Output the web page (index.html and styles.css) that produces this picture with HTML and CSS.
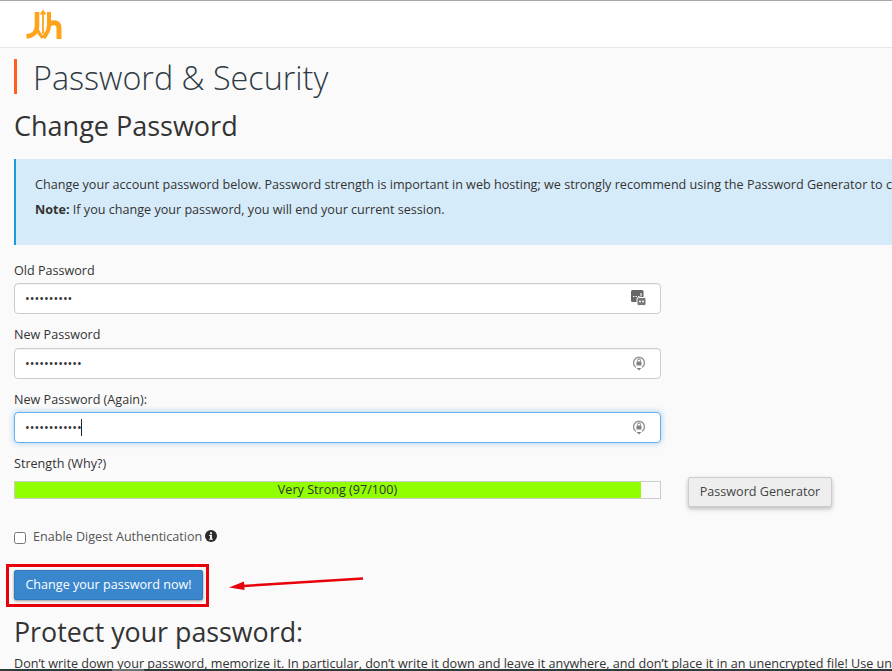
FILE: index.html
```html
<!DOCTYPE html>
<html lang="en">
<head>
  <meta charset="UTF-8" />
  <title>Password &amp; Security</title>
  <link rel="stylesheet" href="styles.css">
</head>
<body>
  <header class="topbar">
    <svg class="logo" width="36" height="32" viewBox="0 0 36 32" fill="none" stroke="#ffa31a" stroke-width="4.600">
      <path d="M11 3v13c0 7-3 10.500-10.500 11.500" />
      <path d="M11 18c0 5 3 7 5.500 11" stroke-width="3" />
      <path d="M23 3v13c0 7-3 9-5.500 13" stroke-width="4" />
      <path d="M23 16c2-3 10-4 10 3v11" stroke-width="5" />
      <path d="M17 5v20" stroke-width="1.800" />
      <path d="M13.500 5.500L17 .5l3.500 5z" fill="#ffa31a" stroke="none" />
    </svg>
  </header>

  <main class="page">
    <h1 class="page-title">Password &amp; Security</h1>
    <h2 class="section-title">Change Password</h2>

    <div class="notice">
      <p>Change your account password below. Password strength is important in web hosting; we strongly recommend using the Password Generator to create your password.</p>
      <p><b>Note:</b> If you change your password, you will end your current session.</p>
    </div>

    <form class="form">
      <div class="field">
        <label for="old">Old Password</label>
        <div class="input-wrap">
          <input id="old" class="input" type="password" value="aaaaaaaaaa">
          <svg class="input-icon" width="15" height="16" viewBox="0 0 15 16">
            <rect x="0" y="0" width="12.500" height="12" rx="1.500" fill="#666" />
            <rect x="6" y="7.500" width="9" height="8" rx="1.500" fill="#777" stroke="#fafafa" stroke-width="1" />
            <path d="M2 6.500h1.500M4.500 6.500h1.500M7 6.500h1.500M10 3v3.500" stroke="#eee" stroke-width="1.200" />
            <path d="M8 11.500h2M11 11.500h2" stroke="#eee" stroke-width="1.500" />
          </svg>
        </div>
      </div>

      <div class="field">
        <label for="new">New Password</label>
        <div class="input-wrap">
          <input id="new" class="input" type="password" value="aaaaaaaaaaaa">
          <svg class="input-icon" width="14" height="16" viewBox="0 0 14 16" fill="none">
            <path d="M4 12.400A5.500 5.500 0 1 1 10 12.400" stroke="#999" stroke-width="1.500" />
            <rect x="4.500" y="6.500" width="5" height="4" rx=".6" fill="#808080" />
            <path d="M5.500 6.500v-1a1.500 1.500 0 0 1 3 0v1" stroke="#808080" />
            <path d="M4.500 13h5L7 15.500z" fill="#808080" />
          </svg>
        </div>
      </div>

      <div class="field">
        <label for="again">New Password (Again):</label>
        <div class="input-wrap">
          <input id="again" class="input is-focus" type="password" value="aaaaaaaaaaaa">
          <span class="caret"></span>
          <svg class="input-icon" width="14" height="16" viewBox="0 0 14 16" fill="none">
            <path d="M4 12.400A5.500 5.500 0 1 1 10 12.400" stroke="#999" stroke-width="1.500" />
            <rect x="4.500" y="6.500" width="5" height="4" rx=".6" fill="#808080" />
            <path d="M5.500 6.500v-1a1.500 1.500 0 0 1 3 0v1" stroke="#808080" />
            <path d="M4.500 13h5L7 15.500z" fill="#808080" />
          </svg>
        </div>
      </div>

      <div class="strength">
        <div class="strength-label">Strength (Why?)</div>
        <div class="strength-row">
          <div class="meter">
            <div class="meter-fill" style="width: 97%"></div>
            <span class="meter-text">Very Strong (97/100)</span>
          </div>
          <button type="button" class="btn-default">Password Generator</button>
        </div>
      </div>

      <div class="digest">
        <input type="checkbox" id="digest" class="checkbox">
        <label for="digest">Enable Digest Authentication</label>
        <svg width="12" height="12" viewBox="0 0 13 13">
          <circle cx="6.500" cy="6.500" r="6.500" fill="#2b2b2b" />
          <path d="M5.500 2.500h2v2h-2zM4.500 5.500h3v4h1v1h-4v-1h1v-3h-1z" fill="#fff" />
        </svg>
      </div>

      <div class="submit-row">
        <div class="highlight">
          <button type="button" class="btn-primary">Change your password now!</button>
        </div>
        <svg class="arrow" width="136" height="14" viewBox="0 0 136 14">
          <path d="M14 9L134 1.500" stroke="#e8000b" stroke-width="2.400" />
          <path d="M0 10.500L15 4.500L15.500 13z" fill="#e8000b" />
        </svg>
      </div>
    </form>

    <h2 class="protect-title">Protect your password:</h2>
    <p class="protect-text">Don’t write down your password, memorize it. In particular, don’t write it down and leave it anywhere, and don’t place it in an unencrypted file! Use unrelated passwords for systems controlled by different organizations.</p>
  </main>

  <div class="window-edge"></div>
</body>
</html>
```

FILE: styles.css
```css
body {
  position: relative;
  margin: 0;
  height: 671px;
  overflow: hidden;
  background: #fafafa;
  border-top: 1px solid #a8a8a8;
  box-sizing: border-box;
  font-family: 'Open Sans', sans-serif;
  font-size: 12.6px;
  color: #333;
}

.topbar {
  height: 38px;
  background: #fff;
  border-bottom: 1px solid #e6e6ef;
  padding: 8px 0 0 26px;
}

.logo {
  display: block;
}

.page {
  padding: 11px 0 0 14px;
  width: 1100px;
}

.page-title {
  margin: 0;
  padding-left: 16px;
  border-left: 3px solid #ff5f1f;
  height: 35px;
  line-height: 37px;
  font-size: 32.3px;
  font-weight: 300;
  color: #2f3a45;
}

.section-title {
  margin: 13px 0 0;
  height: 36px;
  font-size: 27px;
  font-weight: 400;
  line-height: 38px;
  color: #333;
}

.notice {
  margin-top: 16px;
  height: 86px;
  box-sizing: border-box;
  padding: 17px 0 0 19px;
  background: #d6ebf9;
  border-left: 2px solid #1b9ae0;
}

.notice p {
  margin: 0 0 7px;
  line-height: 18px;
  white-space: nowrap;
}

.form {
  width: 647px;
  margin-top: 16px;
}

.field {
  margin-bottom: 11px;
}

.field label {
  display: block;
  font-weight: 500;
  line-height: 20px;
  margin-bottom: 2px;
}

.field:nth-child(2) label {
  margin-bottom: 3px;
}

.input-wrap {
  position: relative;
}

.input {
  display: block;
  width: 100%;
  height: 31px;
  box-sizing: border-box;
  padding: 0 10px;
  background: #fff;
  border: 1px solid #ccc;
  border-radius: 4px;
  font-family: 'Open Sans', sans-serif;
  font-size: 12.6px;
  color: #333;
  outline: none;
  box-shadow: inset 0 1px 1px rgba(0, 0, 0, 0.05);
}

.is-focus {
  border-color: #66afe9;
  box-shadow: 0 0 6px rgba(102, 175, 233, 0.6);
}

.caret {
  position: absolute;
  left: 67px;
  top: 7px;
  width: 1px;
  height: 17px;
  background: #222;
}

.input-icon {
  position: absolute;
  right: 15px;
  top: 7px;
}

.strength-label {
  font-weight: 500;
  line-height: 20px;
  margin-top: 2px;
}

.strength-row {
  display: flex;
  align-items: flex-start;
  width: 830px;
  margin-top: 3px;
}

.meter {
  position: relative;
  flex: 0 0 647px;
  height: 18px;
  margin-top: 4px;
  box-sizing: border-box;
  background: #fafafa;
  border: 1px solid #ccc;
}

.meter-fill {
  height: 100%;
  background: #91ff00;
}

.meter-text {
  position: absolute;
  left: 0;
  right: 0;
  top: 0;
  text-align: center;
  font-size: 12.6px;
  line-height: 16px;
}

.btn-default {
  margin-left: 27px;
  width: 144px;
  height: 30px;
  padding: 0 0 2px;
  background: #eee;
  border: 1px solid #ccc;
  border-radius: 2px;
  font-family: 'Open Sans', sans-serif;
  font-size: 12.6px;
  color: #444;
  box-shadow: 0 2px 4px rgba(0, 0, 0, 0.25);
}

.digest {
  display: flex;
  align-items: center;
  gap: 3px;
  margin-top: 19px;
  height: 20px;
  color: #555;
}

.checkbox {
  margin: 4px 4px 0 0;
  width: 12px;
  height: 12px;
}

.submit-row {
  display: flex;
  align-items: center;
  margin: 18px 0 0 -8px;
}

.highlight {
  border: 3px solid #e8000b;
  padding: 3px 3px 4px 5px;
}

.btn-primary {
  display: block;
  width: 189px;
  height: 30px;
  padding: 0 0 2px;
  background: #3a87cd;
  border: 1px solid #2f78ba;
  border-radius: 2px;
  font-family: 'Open Sans', sans-serif;
  font-size: 12.6px;
  color: #fff;
  box-shadow: 0 1px 3px rgba(0, 0, 0, 0.4);
}

.arrow {
  margin: 0 0 3px 20px;
}

.protect-title {
  margin: 7px 0 0;
  font-size: 26.8px;
  font-weight: 400;
  line-height: 36px;
  color: #333;
}

.protect-text {
  margin: 5px 0 0;
  line-height: 18px;
}

.window-edge {
  position: absolute;
  left: 0;
  right: 0;
  bottom: 0;
  height: 2px;
  background: #2f3b3b;
}

.window-edge::after {
  content: '';
  position: absolute;
  left: 112px;
  width: 32px;
  height: 2px;
  background: #6b7474;
}
```
